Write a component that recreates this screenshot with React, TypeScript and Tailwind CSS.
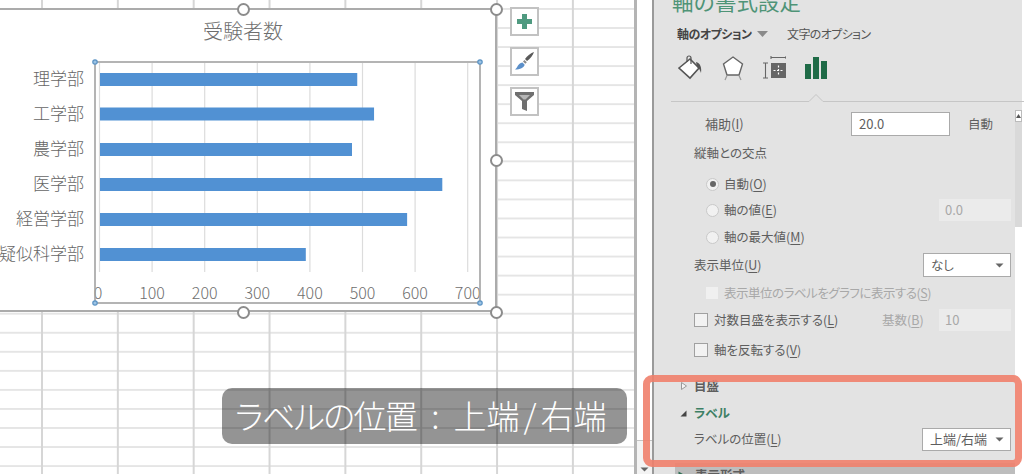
import React from 'react';

const bars = [
  { name: '理学部', value: 490, y: 73 },
  { name: '工学部', value: 522, y: 107.5 },
  { name: '農学部', value: 480, y: 143 },
  { name: '医学部', value: 652, y: 178 },
  { name: '経営学部', value: 585, y: 213 },
  { name: '疑似科学部', value: 392, y: 248 },
];
const ticks = [0, 100, 200, 300, 400, 500, 600, 700];
const tickX = (v: number) => 99.5 + v * 0.526;

// Underlined access key, e.g. (I)
const Key = ({ k }: { k: string }) => (
  <>
    (<span className="underline underline-offset-2">{k}</span>)
  </>
);

const Radio = ({ on }: { on?: boolean }) => (
  <span className="flex h-[13px] w-[13px] items-center justify-center rounded-full border border-[#c9c9c9] bg-[#f1f1f1]">
    {on && <span className="h-[6px] w-[6px] rounded-full bg-[#666]" />}
  </span>
);

const Check = () => <span className="block h-[14px] w-[14px] border border-[#a0a0a0] bg-[#f2f2f2]" />;

const Caret = () => (
  <svg width="9" height="5" viewBox="0 0 9 5" className="shrink-0">
    <path d="M0.5 0.5h8l-4 4z" fill="#666" />
  </svg>
);

const Handle = ({ className }: { className: string }) => (
  <span className={`absolute h-[13px] w-[13px] rounded-full border-2 border-[#8c8c8c] bg-white ${className}`} />
);

const ChartCard = () => (
  <div className="absolute left-[-20px] top-[8px] h-[304px] w-[517px] border-2 border-[#ababab] bg-white">
    <svg width="513" height="300" viewBox="-18 10 513 300" className="block font-light">
      <text x="243" y="39" textAnchor="middle" fontSize="20" fill="#6e6e6e">受験者数</text>
      {ticks.slice(1).map((t) => (
        <line key={t} x1={tickX(t)} x2={tickX(t)} y1="63" y2="272" stroke="#dcdcdc" strokeWidth="1.2" />
      ))}
      <line x1="99.5" x2="99.5" y1="63" y2="272" stroke="#dcdcdc" strokeWidth="1.2" />
      {bars.map((b) => (
        <g key={b.name}>
          <rect x="100" y={b.y} width={b.value * 0.525} height="13" fill="#5191d3" />
          <text x="84" y={b.y + 12} textAnchor="end" fontSize="17" fill="#666">{b.name}</text>
        </g>
      ))}
      {ticks.map((t) => (
        <text key={t} x={t === 0 ? 98 : tickX(t)} y="299" textAnchor="middle" fontSize="16" fill="#6e6e6e">{t}</text>
      ))}
      <rect x="95" y="62" width="385" height="241" fill="none" stroke="#a2a2a2" strokeWidth="1.6" />
      {[[95, 62], [480, 62], [95, 303], [480, 303]].map(([x, y]) => (
        <circle key={`${x}-${y}`} cx={x} cy={y} r="2.2" fill="#9cc3e4" stroke="#5b93c4" strokeWidth="1.2" />
      ))}
    </svg>
  </div>
);

const ChartTools = () => (
  <div className="absolute left-[510px] top-[7px] flex flex-col gap-[11px]">
    <div className="flex h-[29px] w-[29px] items-center justify-center border-2 border-[#c2c2c2] bg-white">
      <svg width="17" height="17" viewBox="0 0 17 17">
        <path d="M6 1h5v5h5v5h-5v5H6v-5H1V6h5z" fill="#4f9a80" />
      </svg>
    </div>
    <div className="flex h-[29px] w-[29px] items-center justify-center border-2 border-[#c2c2c2] bg-white">
      <svg width="21" height="21" viewBox="0 0 21 21">
        <path d="M20 1c-1 3-4 7-7 9l-2-2c2-3 6-6 9-7z" fill="#5a5a5a" />
        <path d="M10.5 9l2.3 2.3-1.5 1.5-2.3-2.3z" fill="#8a8a8a" />
        <path d="M8.5 11.5l2.2 2.2c-.8 3-4.500 4.800-9.700 4.800 2.500-1.500 2.500-6 7.500-7z" fill="#5b8fc9" />
      </svg>
    </div>
    <div className="flex h-[29px] w-[29px] items-center justify-center border-2 border-[#c2c2c2] bg-white">
      <svg width="21" height="21" viewBox="0 0 21 21">
        <path d="M1 1h19v3l-7 6v10l-5-2v-8L1 4z" fill="#6f6f6f" />
        <path d="M5 4h11l-4.500 4.500h-2z" fill="#b5b5b5" />
      </svg>
    </div>
  </div>
);

const Sheet = () => (
  <div className="relative h-full w-[634px] shrink-0 bg-white bg-[linear-gradient(to_right,#d6d6d6_1.5px,transparent_1.5px),linear-gradient(to_bottom,#e5e5e5_1.5px,transparent_1.5px)] bg-[size:75.85px_19.05px] bg-[position:41px_8px]">
    <ChartCard />
    <Handle className="left-[237px] top-[3px]" />
    <Handle className="left-[490px] top-[3px]" />
    <Handle className="left-[490px] top-[154px]" />
    <Handle className="left-[237px] top-[306px]" />
    <Handle className="left-[490px] top-[306px]" />
    <ChartTools />
    <div className="absolute left-[222px] top-[388px] flex h-[56px] w-[405px] items-center whitespace-nowrap rounded-[10px] bg-black/[.42] pl-[13px] text-[33px] font-light text-white [font-feature-settings:'palt']">
      <span className="tracking-[-1.6px]">ラベルの位置</span>
      <span className="ml-[15px] mr-[14px]">:</span>
      <span>上端</span>
      <span className="mx-[4px]">/</span>
      <span>右端</span>
    </div>
  </div>
);

const PanelIcons = () => (
  <div className="ml-[24px] flex h-[34px] items-center gap-[19px]">
    <svg width="25" height="26" viewBox="0 0 25 26">
      <path d="M1 13L12 4l9 9-9 10z" fill="#fff" stroke="#555" strokeWidth="1.6" />
      <path d="M9 7V3a2 2 0 0 1 4 0v6" fill="none" stroke="#555" strokeWidth="1.2" />
      <path d="M18 7c4 1 6 5 5 11-1-3-2-5-4-6z" fill="#555" />
    </svg>
    <svg width="22" height="26" viewBox="0 0 22 26">
      <path d="M11 2l9.500 7-3.500 11H5L1.500 9z" fill="#fff" stroke="#666" strokeWidth="1.4" />
      <path d="M5 20.500L3 25M17 20.500l2 4.500" stroke="#999" strokeWidth="1.200" fill="none" />
    </svg>
    <svg width="23" height="24" viewBox="0 0 23 24">
      <path d="M8 1.500h15M8 0v3M23 0v3M0 7h5M2.500 7v15M0 22h5" stroke="#666" strokeWidth="1.100" fill="none" />
      <rect x="8" y="7" width="15" height="15" fill="#666" />
      <path d="M15.500 9.500v10M10.500 14.500h10" stroke="#fff" strokeWidth="1.200" strokeDasharray="2 1.500" />
    </svg>
    <svg width="23" height="24" viewBox="0 0 23 24">
      <path d="M0 8h6v15H0zM8 1h6v22H8zM16 5h6v18h-6z" fill="#1f6b47" />
    </svg>
  </div>
);

const PanelRows = () => (
  <div className="min-w-0 flex-1 pl-[40px] pr-[4px] text-[12.5px] text-[#5e5e5e] [font-feature-settings:'palt']">
    <div className="flex h-[24px] items-center">
      <span className="ml-[11px] w-[146px] text-[13px]">補助<Key k="I" /></span>
      <span className="flex h-[24px] w-[99px] items-center border border-[#aaa] bg-white pl-[7px] text-[13px]">20.0</span>
      <span className="ml-[18px]">自動</span>
    </div>
    <div className="flex h-[34px] items-center">縦軸との交点</div>
    <div className="flex h-[28px] items-center gap-[5px] pl-[12px]"><Radio on /><span>自動<Key k="O" /></span></div>
    <div className="flex h-[24px] items-center justify-between pl-[12px]">
      <span className="flex items-center gap-[5px]"><Radio /><span>軸の値<Key k="E" /></span></span>
      <span className="flex h-[22px] w-[72px] items-center bg-[#ebebeb] pl-[6px] text-[13px] text-[#a8a8a8]">0.0</span>
    </div>
    <div className="flex h-[30px] items-center gap-[5px] pl-[12px]"><Radio /><span>軸の最大値<Key k="M" /></span></div>
    <div className="flex h-[26px] items-center justify-between">
      <span>表示単位<Key k="U" /></span>
      <span className="flex h-[24px] w-[88px] items-center justify-between border border-[#aaa] bg-white pl-[7px] pr-[6px]">なし<Caret /></span>
    </div>
    <div className="flex h-[30px] items-center gap-[6px] pl-[12px] text-[#a8a8a8]">
      <span className="block h-[12px] w-[12px] bg-[#f0f0f0]" />
      <span className="tracking-[-0.5px]">表示単位のラベルをグラフに表示する<Key k="S" /></span>
    </div>
    <div className="flex h-[24px] items-center">
      <Check />
      <span className="ml-[6px] w-[168px]">対数目盛を表示する<Key k="L" /></span>
      <span className="w-[57px] text-[#a8a8a8]">基数<Key k="B" /></span>
      <span className="flex h-[22px] w-[72px] items-center bg-[#ebebeb] pl-[6px] text-[13px] text-[#a8a8a8]">10</span>
    </div>
    <div className="flex h-[36px] items-center gap-[6px]"><Check /><span>軸を反転する<Key k="V" /></span></div>
    <div className="relative flex h-[36px] items-center font-bold">
      <svg width="6" height="8" viewBox="0 0 6 8" className="absolute left-[-13px]"><path d="M.5.500l5 3.500-5 3.500z" fill="#f5f5f5" stroke="#999" /></svg>
      目盛
    </div>
    <div className="relative flex h-[18px] items-center font-bold text-[#3d8065]">
      <svg width="7" height="7" viewBox="0 0 7 7" className="absolute left-[-14px]"><path d="M6.500.500v6h-6z" fill="#444" /></svg>
      ラベル
    </div>
    <div className="flex h-[34px] items-center justify-between">
      <span>ラベルの位置<Key k="L" /></span>
      <span className="flex h-[23px] w-[89px] items-center justify-between border border-[#aaa] bg-white pl-[7px] pr-[6px] text-[13px]">上端/右端<Caret /></span>
    </div>
    <div className="relative ml-[-19px] mr-[-4px] mt-[7px] flex h-[24px] items-center bg-[#bdbdbd] pl-[20px] font-bold">
      <svg width="8" height="9" viewBox="0 0 8 9" className="absolute left-[3px]"><path d="M.5.500l7 4-7 4z" fill="#2f6f54" /></svg>
      表示形式
    </div>
  </div>
);

const FormatPanel = () => (
  <div className="flex h-full min-w-0 flex-1 flex-col border-l-2 border-[#9a9a9a] bg-[#e3e3e3]">
    <div className="mt-[-12px] ml-[18px] h-[26px] whitespace-nowrap text-[21.5px] leading-[26px] text-[#4f9477]">軸の書式設定</div>
    <div className="ml-[23px] mt-[10px] flex h-[20px] items-center whitespace-nowrap text-[12px] text-[#555] [font-feature-settings:'palt']">
      <span className="w-[73px] font-bold tracking-[-0.5px] text-[#444]">軸のオプション</span>
      <svg width="11" height="6" viewBox="0 0 11 6" className="ml-[7px]"><path d="M0 0h11L5.500 6z" fill="#8a8a8a" /></svg>
      <span className="ml-[19px] tracking-[-0.6px]">文字のオプション</span>
    </div>
    <div className="mt-[7px]"><PanelIcons /></div>
    <svg width="368" height="10" viewBox="0 0 368 10" className="mt-[8px] ml-[17px] block shrink-0">
      <path d="M0 8.500h138l7-7 7 7h216" fill="none" stroke="#c6c6c6" />
    </svg>
    <div className="mt-[9px] flex min-h-0 flex-1">
      <PanelRows />
      <div className="mt-[-2px] flex w-[7px] shrink-0 flex-col">
        <div className="flex h-[12px] items-center justify-center border border-[#bbb] bg-white">
          <svg width="5" height="4" viewBox="0 0 5 4"><path d="M2.500 0l2.500 4H0z" fill="#555" /></svg>
        </div>
        <div className="h-[105px] bg-[#d9d9d9]" />
        <div className="flex-1 bg-white" />
      </div>
    </div>
  </div>
);

export default function App() {
  return (
    <div className="relative flex h-[474px] w-[1024px] overflow-hidden bg-white font-['Noto_Sans_CJK_JP','Liberation_Sans',sans-serif]">
      <Sheet />
      <div className="flex h-full w-[18px] shrink-0 flex-col border-l-[3px] border-[#b4b4b4] bg-[#f3f3f3]">
        <div className="h-[441px] border-b border-[#c4c4c4] bg-white" />
        <div className="flex flex-1 items-end justify-center pb-[2px]"><Caret /></div>
      </div>
      <div className="flex h-full min-w-0 flex-1 pr-[2px]"><FormatPanel /></div>
      <div className="absolute left-[643px] top-[375px] h-[92px] w-[379px] rounded-[9px] border-[7px] border-[#f0806c]/90" />
    </div>
  );
}
